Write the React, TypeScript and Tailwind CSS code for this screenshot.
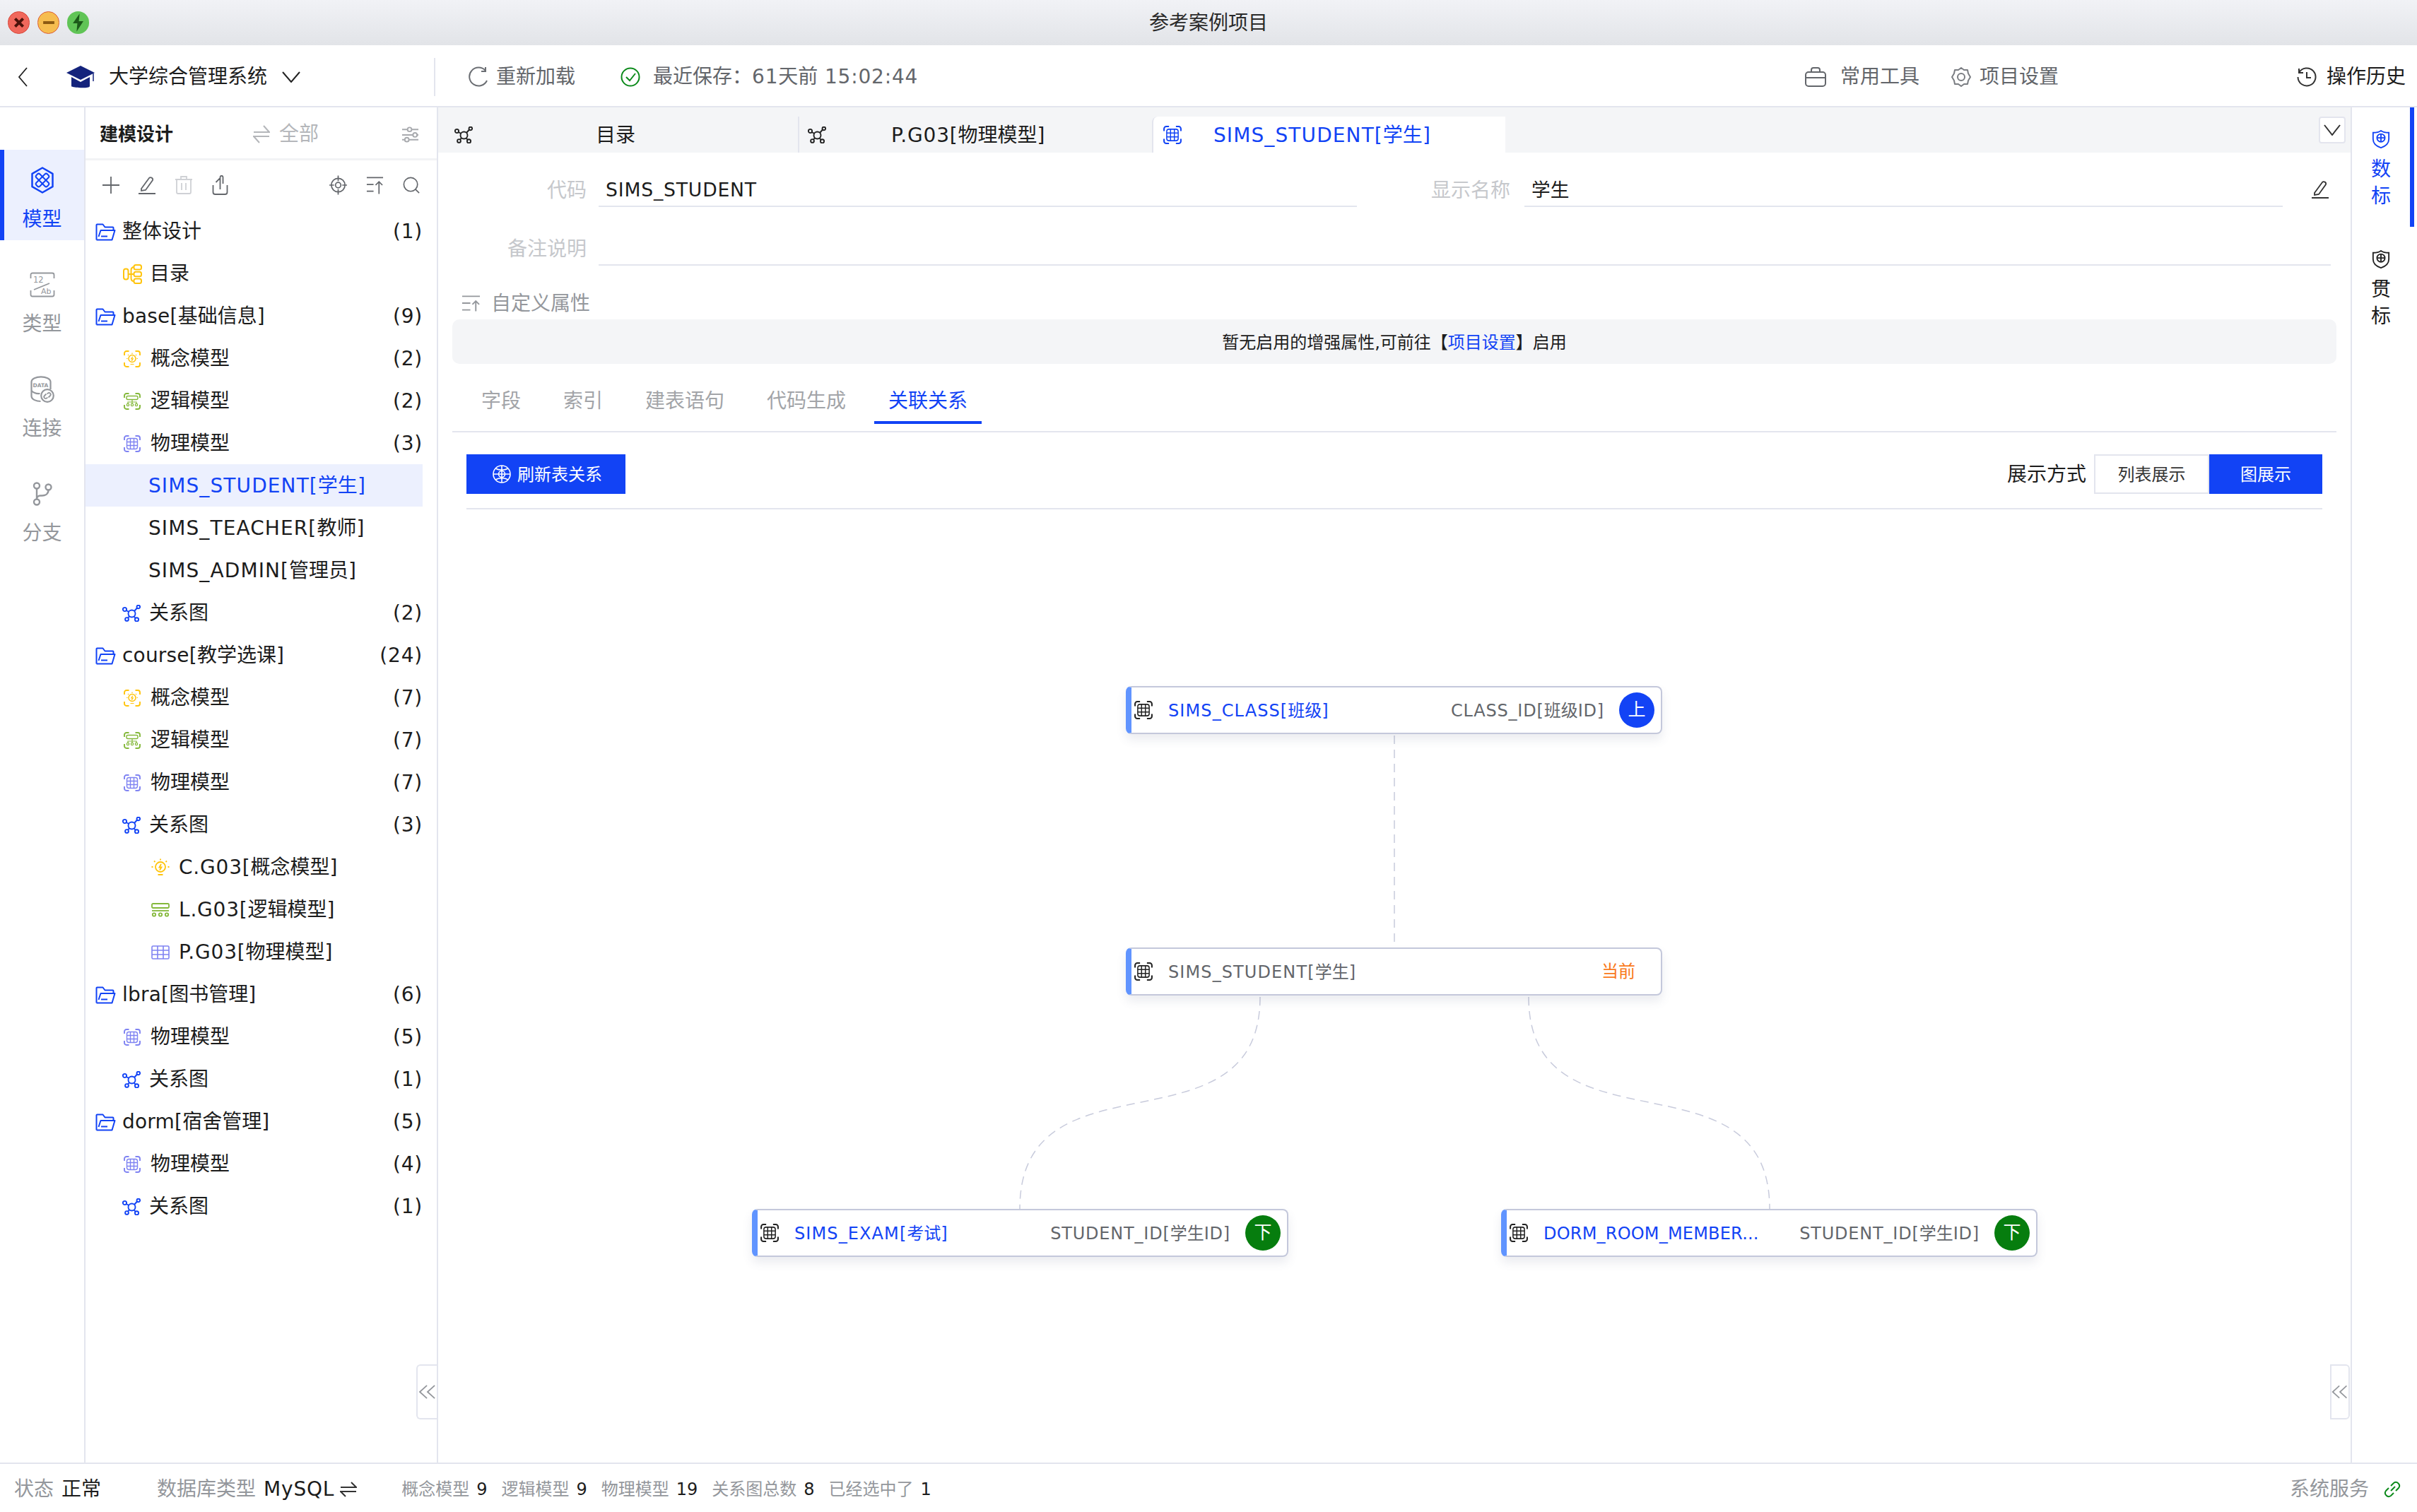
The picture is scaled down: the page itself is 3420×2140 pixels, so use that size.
import React from 'react';

const BLUE = '#1243f5';

type IconProps = { className?: string; color?: string };

// latin runs sit a touch wider than the fallback font gives, caps more than lowercase
const trackFor = (part: string) => {
  if (/^[a-z]/.test(part)) return 'tracking-[0.2px]';
  if (part.startsWith('SIMS_') && part.endsWith('[')) return 'tracking-[1.1px]';
  if (part.startsWith('DORM_')) return 'tracking-[0.2px]';
  return 'tracking-[0.8px]';
};

const Mix = ({ text }: { text: string }) => (
  <>
    {text
      .split(/([\x00-\x7f]+)/)
      .filter(Boolean)
      .map((part, i) =>
        /^[\x00-\x7f]/.test(part) ? (
          <span key={i} className={trackFor(part)}>
            {part}
          </span>
        ) : (
          <React.Fragment key={i}>{part}</React.Fragment>
        )
      )}
  </>
);

// corner brackets shared by the three model icons
const Corners = ({ color }: { color: string }) => (
  <path d="M1 7V4a3 3 0 0 1 3-3h3.500M16.500 1H20a3 3 0 0 1 3 3v3M23 17v3a3 3 0 0 1-3 3h-3.500M7.500 23H4a3 3 0 0 1-3-3v-3" fill="none" stroke={color} strokeWidth="1.900" />
);

const PhysicalIcon = ({ className, color = '#7f83f2' }: IconProps) => (
  <svg viewBox="0 0 24 24" className={className} fill="none">
    <Corners color={color} />
    <rect x="4.500" y="4.500" width="15" height="15" rx="3" stroke={color} strokeWidth="1.400" />
    <path d="M9.500 4.500v15M14.500 4.500v15M4.500 9.500h15M4.500 14.500h15" stroke={color} strokeWidth="1.400" />
  </svg>
);

const LogicIcon = ({ className }: IconProps) => (
  <svg viewBox="0 0 24 24" className={className} fill="none">
    <Corners color="#84b83a" />
    <rect x="4" y="4.500" width="16" height="5" rx="2" stroke="#84b83a" strokeWidth="1.400" />
    <path d="M12 9.500V15M6 15v-2h12v2" stroke="#84b83a" strokeWidth="1.200" />
    <circle cx="6" cy="17" r="1.700" stroke="#84b83a" strokeWidth="1.200" />
    <circle cx="12" cy="17" r="1.700" stroke="#84b83a" strokeWidth="1.200" />
    <circle cx="18" cy="17" r="1.700" stroke="#84b83a" strokeWidth="1.200" />
  </svg>
);

const BulbIcon = ({ className }: IconProps) => (
  <svg viewBox="0 0 24 24" className={className} fill="none">
    <Corners color="#ffc40d" />
    <circle cx="12" cy="11.500" r="5" stroke="#ffc40d" strokeWidth="1.500" />
    <path d="M9.500 19.500h5M12.800 8.800l-2 3h2.400l-2 3" stroke="#ffc40d" strokeWidth="1.200" />
    <path d="M12 3.500v1.500M6 6l1 1M18 6l-1 1M4 11.500h1.500M18.500 11.500H20" stroke="#ffc40d" strokeWidth="1.200" />
  </svg>
);

const RelationIcon = ({ className, color = BLUE }: IconProps) => (
  <svg viewBox="0 0 26 24" className={className} fill="none" stroke={color} strokeWidth="1.900">
    <circle cx="13.500" cy="12.500" r="5" />
    <circle cx="3.500" cy="6.500" r="2.600" />
    <circle cx="22.800" cy="3" r="2.300" />
    <circle cx="6.500" cy="20.500" r="2.400" />
    <circle cx="20.500" cy="20.800" r="2.600" />
    <path d="M5.800 8l3.500 2M17 9l4-4.500M10.200 16.200l-2.300 2.500M16.700 16.500l2 2.300" />
  </svg>
);

const FolderOpen = ({ className }: IconProps) => (
  <svg viewBox="0 0 29 25" className={className} fill="none" stroke={BLUE} strokeWidth="2" strokeLinejoin="round">
    <path d="M1.5 23.5V2.5a1 1 0 0 1 1-1h8l3 4h11a1 1 0 0 1 1 1V10" />
    <path d="M1.5 23.5h22l4-13.5H7.5l-3 9" />
    <path d="M8 18.5h9" />
  </svg>
);

const MindIcon = ({ className }: IconProps) => (
  <svg viewBox="0 0 27 28" className={className} fill="none" stroke="#ffc40d" strokeWidth="2">
    <rect x="1" y="6.500" width="6.500" height="15" rx="3" />
    <rect x="15.500" y="1" width="10.500" height="6.500" rx="2.500" />
    <rect x="15.500" y="10.700" width="10.500" height="6.500" rx="2.500" />
    <rect x="15.500" y="20.500" width="10.500" height="6.500" rx="2.500" />
    <path d="M7.500 14h8M11.500 14V8.500c0-3 1-4.500 4-4.500M11.500 14v5.500c0 3 1 4.500 4 4.500" />
  </svg>
);

const SmallBulb = ({ className }: IconProps) => (
  <svg viewBox="0 0 26 26" className={className} fill="none" stroke="#ffc40d" strokeWidth="1.8">
    <circle cx="13" cy="12" r="7" />
    <path d="M9.5 23h7M14 8l-2.500 4.500h3L12 16.500" />
    <path d="M13 0.500v2M0.500 12h2M23.500 12h2M4 3.500l1.500 1.500M22 3.500L20.500 5" />
  </svg>
);

const SmallLogic = ({ className }: IconProps) => (
  <svg viewBox="0 0 26 20" className={className} fill="none" stroke="#84b83a" strokeWidth="1.8">
    <rect x="1" y="1" width="24" height="6" rx="1.500" />
    <path d="M1 11h24" />
    <circle cx="4" cy="16.500" r="2.200" />
    <circle cx="13" cy="16.500" r="2.200" />
    <circle cx="22" cy="16.500" r="2.200" />
  </svg>
);

const SmallGrid = ({ className }: IconProps) => (
  <svg viewBox="0 0 26 20" className={className} fill="none" stroke="#7f83f2" strokeWidth="1.600">
    <rect x="1" y="1" width="24" height="18" rx="1.500" />
    <path d="M9 1v18M17 1v18M1 7h24M1 13h24" />
  </svg>
);

type TreeRow = { label: string; level: number; icon?: string; count?: string; selected?: boolean };

const rows: TreeRow[] = [
  { label: '整体设计', level: 1, icon: 'folder', count: '(1)' },
  { label: '目录', level: 2, icon: 'mind' },
  { label: 'base[基础信息]', level: 1, icon: 'folder', count: '(9)' },
  { label: '概念模型', level: 2, icon: 'bulb', count: '(2)' },
  { label: '逻辑模型', level: 2, icon: 'logic', count: '(2)' },
  { label: '物理模型', level: 2, icon: 'grid', count: '(3)' },
  { label: 'SIMS_STUDENT[学生]', level: 0, selected: true },
  { label: 'SIMS_TEACHER[教师]', level: 0 },
  { label: 'SIMS_ADMIN[管理员]', level: 0 },
  { label: '关系图', level: 2, icon: 'rel', count: '(2)' },
  { label: 'course[教学选课]', level: 1, icon: 'folder', count: '(24)' },
  { label: '概念模型', level: 2, icon: 'bulb', count: '(7)' },
  { label: '逻辑模型', level: 2, icon: 'logic', count: '(7)' },
  { label: '物理模型', level: 2, icon: 'grid', count: '(7)' },
  { label: '关系图', level: 2, icon: 'rel', count: '(3)' },
  { label: 'C.G03[概念模型]', level: 3, icon: 'sbulb' },
  { label: 'L.G03[逻辑模型]', level: 3, icon: 'slogic' },
  { label: 'P.G03[物理模型]', level: 3, icon: 'sgrid' },
  { label: 'lbra[图书管理]', level: 1, icon: 'folder', count: '(6)' },
  { label: '物理模型', level: 2, icon: 'grid', count: '(5)' },
  { label: '关系图', level: 2, icon: 'rel', count: '(1)' },
  { label: 'dorm[宿舍管理]', level: 1, icon: 'folder', count: '(5)' },
  { label: '物理模型', level: 2, icon: 'grid', count: '(4)' },
  { label: '关系图', level: 2, icon: 'rel', count: '(1)' },
];

const RowIcon = ({ type }: { type?: string }) => {
  if (type === 'folder') return <FolderOpen className="w-[29px] h-[25px] mr-[9px] shrink-0" />;
  if (type === 'mind') return <MindIcon className="w-[27px] h-[28px] mr-[11px] shrink-0 -ml-[1px]" />;
  if (type === 'bulb') return <BulbIcon className="w-[24px] h-[24px] mr-[14px] shrink-0" />;
  if (type === 'logic') return <LogicIcon className="w-[24px] h-[24px] mr-[14px] shrink-0" />;
  if (type === 'grid') return <PhysicalIcon className="w-[24px] h-[24px] mr-[14px] shrink-0" />;
  if (type === 'rel') return <RelationIcon className="w-[26px] h-[24px] mr-[12px] shrink-0 -ml-[2px]" />;
  if (type === 'sbulb') return <SmallBulb className="w-[26px] h-[26px] mr-[13px] shrink-0" />;
  if (type === 'slogic') return <SmallLogic className="w-[26px] h-[20px] mr-[13px] shrink-0" />;
  if (type === 'sgrid') return <SmallGrid className="w-[26px] h-[20px] mr-[13px] shrink-0" />;
  return null;
};

const levelPad: Record<number, string> = { 0: 'pl-[89px]', 1: 'pl-[14px]', 2: 'pl-[54px]', 3: 'pl-[93px]' };

const SideItem = ({ label, active, icon }: { label: string; active?: boolean; icon: React.ReactNode }) => (
  <div className={`relative h-[128px] flex flex-col items-center ${active ? 'bg-[#ecf0fe]' : ''}`}>
    {active && <div className="absolute left-0 top-0 bottom-0 w-[6px] bg-[#1243f5]" />}
    <div className="h-[40px] mt-[23px] flex items-center justify-center">{icon}</div>
    <div className={`mt-[17px] text-[28px] leading-[38px] ${active ? 'text-[#1243f5]' : 'text-[#94979c]'}`}>{label}</div>
  </div>
);

type NodeProps = {
  pos: string;
  name: string;
  nameClass?: string;
  field?: string;
  badge?: string;
  badgeClass?: string;
  current?: boolean;
};

const TableNode = ({ pos, name, nameClass = 'text-[#1243f5]', field, badge, badgeClass, current }: NodeProps) => (
  <div className={`absolute w-[759px] h-[68px] flex items-center bg-white rounded-[8px] border-2 border-[#c4c8db] border-l-[8px] border-l-[#6094ff] shadow-[0_8px_14px_rgba(90,100,130,0.12)] text-[24px] ${pos}`}>
    <PhysicalIcon color="#222222" className="w-[26px] h-[26px] ml-[4px] mr-[1px] shrink-0" />
    <span className={`ml-[21px] pt-[1px] whitespace-nowrap ${nameClass}`}>
      <Mix text={name} />
    </span>
    <div className="flex-1" />
    {field && (
      <span className="pt-[1px] text-[#63666b] whitespace-nowrap">
        <Mix text={field} />
      </span>
    )}
    {badge && (
      <span className={`w-[50px] h-[50px] ml-[21px] mr-[9px] rounded-full flex items-center justify-center text-white text-[25px] shrink-0 ${badgeClass}`}>{badge}</span>
    )}
    {current && <span className="text-[#f97a1c] mr-[36px]">当前</span>}
  </div>
);

export default function App() {
  return (
    <div
      className="w-[3420px] h-[2140px] flex flex-col bg-white overflow-hidden text-[#1c1c1c] text-[28px]"
      style={{ fontFamily: '"DejaVu Sans", "Noto Sans CJK SC", sans-serif' }}
    >
      {/* title bar */}
      <div className="relative h-[64px] shrink-0 flex items-center justify-center bg-gradient-to-b from-[#f1f2f6] to-[#e2e4e8]">
        <div className="absolute left-[11px] top-[16px] flex gap-[11px]">
          <div className="w-[31px] h-[32px] rounded-full bg-[#f0685c] border border-[#d8473a] flex items-center justify-center">
            <svg viewBox="0 0 16 16" className="w-[18px] h-[18px]"><path d="M3 3l10 10M13 3L3 13" stroke="#4d130b" strokeWidth="3.6" /></svg>
          </div>
          <div className="w-[31px] h-[32px] rounded-full bg-[#f6bd4f] border border-[#dc5f3a] flex items-center justify-center">
            <svg viewBox="0 0 16 16" className="w-[20px] h-[18px]"><path d="M1 8h14" stroke="#8c5a12" strokeWidth="3.6" /></svg>
          </div>
          <div className="w-[31px] h-[32px] rounded-full bg-[#60c456] flex items-center justify-center">
            <svg viewBox="0 0 16 24" className="w-[17px] h-[26px]"><path d="M10 0L1 13h6l-1 11 9-14H9z" fill="#1c5a1a" /></svg>
          </div>
        </div>
        <span className="text-[28px] pt-[2px] text-[#2a2a2a]">参考案例项目</span>
      </div>

      {/* toolbar */}
      <div className="h-[88px] shrink-0 flex items-center border-b-2 border-[#e3e5ee] pt-[4px]">
        <svg viewBox="0 0 16 28" className="w-[16px] h-[28px] ml-[24px]" fill="none" stroke="#222" strokeWidth="1.800"><path d="M14 1L3 14l11 13" /></svg>
        <svg viewBox="0 0 40 32" className="w-[40px] h-[32px] ml-[54px]">
          <path d="M20 0L40 10 20 20 0 10z" fill="#14237c" />
          <path d="M7 16v13c0 2 26 4 26 0V16l-13 7z" fill="#14237c" />
          <path d="M38 11v11" stroke="#14237c" strokeWidth="1.500" />
        </svg>
        <span className="ml-[20px] whitespace-nowrap">大学综合管理系统</span>
        <svg viewBox="0 0 26 16" className="w-[26px] h-[16px] ml-[21px]" fill="none" stroke="#222" strokeWidth="2"><path d="M1 1l12 14L25 1" /></svg>
        <div className="w-[2px] h-[54px] bg-[#e3e5ee] ml-[189px]" />
        <svg viewBox="0 0 28 30" className="w-[28px] h-[30px] ml-[47px]" fill="none" stroke="#6b6e73" strokeWidth="2"><path d="M24 6a13 13 0 1 0 2 14M24 1v6h-6" /></svg>
        <span className="ml-[11px] text-[#63666b] whitespace-nowrap">重新加载</span>
        <svg viewBox="0 0 28 28" className="w-[28px] h-[28px] ml-[64px]" fill="none" stroke="#0c8a1b" strokeWidth="2"><circle cx="14" cy="14" r="12.500" /><path d="M8 14l5 5 8-10" /></svg>
        <span className="ml-[18px] text-[#63666b] whitespace-nowrap">
          <Mix text="最近保存：61天前 15:02:44" />
        </span>
        <div className="flex-1" />
        <svg viewBox="0 0 30 28" className="w-[30px] h-[28px]" fill="none" stroke="#63666b" strokeWidth="2"><rect x="1" y="7" width="28" height="20" rx="4" /><path d="M9 7V4a3 3 0 0 1 3-3h6a3 3 0 0 1 3 3v3M1 15h28" /></svg>
        <span className="ml-[20px] text-[#63666b] whitespace-nowrap">常用工具</span>
        <svg viewBox="0 0 28 28" className="w-[28px] h-[28px] ml-[45px]" fill="none" stroke="#7a7d82" strokeWidth="2"><path d="M14 1l4 3 5 0 1 5 3 5-3 5-1 5-5 0-4 3-4-3-5 0-1-5-3-5 3-5 1-5 5 0z" strokeLinejoin="round" /><circle cx="14" cy="14" r="5" /></svg>
        <span className="ml-[12px] text-[#63666b] whitespace-nowrap">项目设置</span>
        <svg viewBox="0 0 28 28" className="w-[28px] h-[28px] ml-[337px]" fill="none" stroke="#333" strokeWidth="2"><path d="M3 8A12.500 12.500 0 1 1 1.500 14M3 2v6h6M14 7v8h6" /></svg>
        <span className="ml-[14px] mr-[16px] whitespace-nowrap">操作历史</span>
      </div>

      {/* body */}
      <div className="flex-1 flex min-h-0">
        {/* icon rail */}
        <div className="w-[121px] shrink-0 border-r-2 border-[#e3e5ee] pt-[60px] flex flex-col gap-[20px]">
          <SideItem
            label="模型"
            active
            icon={
              <svg viewBox="0 0 34 38" className="w-[34px] h-[38px]" fill="none" stroke="#1243f5" strokeWidth="2.500">
                <path d="M17 1.500l14.500 8.300v18.400L17 36.500 2.500 28.200V9.800z" strokeLinejoin="round" />
                <rect x="13.500" y="8" width="7" height="22" rx="2.500" transform="rotate(45 17 19)" strokeWidth="2" />
                <rect x="13.500" y="8" width="7" height="22" rx="2.500" transform="rotate(-45 17 19)" strokeWidth="2" />
              </svg>
            }
          />
          <SideItem
            label="类型"
            icon={
              <svg viewBox="0 0 36 36" className="w-[36px] h-[36px]" fill="none" stroke="#94979c" strokeWidth="1.800">
                <path d="M1.500 9V4a2.500 2.500 0 0 1 2.500-2.500h28A2.500 2.500 0 0 1 34.500 4v5M1.500 26v6A2.500 2.500 0 0 0 4 34.500h28a2.500 2.500 0 0 0 2.500-2.500v-6M6 25l22-9" />
                <text x="5" y="15" fontSize="11.500" fill="#94979c" stroke="none">12</text>
                <text x="16" y="30.500" fontSize="11" fill="#94979c" stroke="none">Ab</text>
              </svg>
            }
          />
          <SideItem
            label="连接"
            icon={
              <svg viewBox="0 0 34 38" className="w-[34px] h-[38px]" fill="none" stroke="#94979c" strokeWidth="2.200">
                <path d="M1.500 8.500c0-9.500 27-9.500 27 0V19M1.500 8.500v20c0 5 7 7.500 13 7.500" />
                <text x="3.500" y="15.500" fontSize="7.500" fontWeight="700" fill="#94979c" stroke="none">DATA</text>
                <path d="M1.500 21c3 3 8 4.500 12 4" />
                <circle cx="24" cy="28" r="8.800" fill="#ffffff" />
                <path d="M22.500 25.500l-2.500 2.500a2.300 2.300 0 0 0 3.300 3.300l1-1M25.500 30.500L28 28a2.300 2.300 0 0 0-3.300-3.300l-1 1" strokeWidth="1.800" />
              </svg>
            }
          />
          <SideItem
            label="分支"
            icon={
              <svg viewBox="0 0 28 34" className="w-[28px] h-[34px]" fill="none" stroke="#94979c" strokeWidth="2.400">
                <circle cx="6" cy="5.500" r="4" />
                <circle cx="6" cy="28.500" r="4" />
                <circle cx="22.500" cy="7.500" r="4" />
                <path d="M6 9.500v15M22.500 11.500c0 6-5 8-9 8H11c-3 0-5 2-5 5" />
              </svg>
            }
          />
        </div>

        {/* tree panel */}
        <div className="relative w-[499px] shrink-0 border-r-2 border-[#e3e5ee] flex flex-col">
          <div className="h-[75px] shrink-0 flex items-center border-b-[3px] border-[#f2f3f5] pl-[20px] pr-[25px] pt-[4px]">
            <span className="text-[26px] font-semibold whitespace-nowrap">建模设计</span>
            <svg viewBox="0 0 24 28" className="w-[24px] h-[28px] ml-[113px]" fill="none" stroke="#b4b6ba" strokeWidth="2"><path d="M1 11h22l-8-9M23 17H1l8 9" /></svg>
            <span className="ml-[13px] text-[#b4b6ba]">全部</span>
            <div className="flex-1" />
            <svg viewBox="0 0 26 24" className="w-[25px] h-[24px]" fill="none" stroke="#a8aaae" strokeWidth="2"><path d="M1 5h8M15 5h10M1 13h16M23 13h2M1 20h4M11 20h14" /><circle cx="12" cy="5" r="3" /><circle cx="20" cy="13" r="3" /><circle cx="8" cy="20" r="3" /></svg>
          </div>
          <div className="h-[70px] shrink-0 flex items-center pl-[24px] pr-[24px]">
            <svg viewBox="0 0 24 24" className="w-[24px] h-[24px]" fill="none" stroke="#63666b" strokeWidth="1.800"><path d="M12 0v24M0 12h24" /></svg>
            <svg viewBox="0 0 26 26" className="w-[26px] h-[26px] ml-[26px]" fill="none" stroke="#63666b" strokeWidth="1.800"><path d="M5 18L16 3c2-2 6 0 5 3L11 20l-6 1zM1 25h24" /></svg>
            <svg viewBox="0 0 26 26" className="w-[26px] h-[26px] ml-[26px]" fill="none" stroke="#cfd1d5" strokeWidth="1.800"><path d="M1 5h24M9 5V1h8v4M3 5v18a2 2 0 0 0 2 2h16a2 2 0 0 0 2-2V5M10 10v10M16 10v10" /></svg>
            <svg viewBox="0 0 26 28" className="w-[27px] h-[28px] ml-[25px]" fill="none" stroke="#63666b" strokeWidth="1.800"><path d="M13 20V3c0-3 4-3 4 0v9M7 10l6-6M3 14v10a3 3 0 0 0 3 3h14a3 3 0 0 0 3-3V14" /></svg>
            <div className="flex-1" />
            <svg viewBox="0 0 26 28" className="w-[25px] h-[28px]" fill="none" stroke="#63666b" strokeWidth="1.800"><circle cx="13" cy="14" r="10" /><circle cx="13" cy="14" r="4" /><path d="M13 0v8M13 20v8M0 14h7M19 14h7" /></svg>
            <svg viewBox="0 0 26 26" className="w-[25px] h-[26px] ml-[27px]" fill="none" stroke="#63666b" strokeWidth="1.800"><path d="M1 2h24M1 12h10M1 22h10M19 26V8M14 13l5-5 5 5" /></svg>
            <svg viewBox="0 0 26 26" className="w-[24px] h-[26px] ml-[27px]" fill="none" stroke="#63666b" strokeWidth="1.800"><circle cx="12" cy="12" r="10.500" /><path d="M19 19l6 6" /></svg>
          </div>
          <div className="pr-[20px]">
            {rows.map((r, i) => (
              <div key={i} className={`h-[60px] pt-[2px] flex items-center ${levelPad[r.level]} ${r.selected ? 'bg-[#ecf0fe] text-[#1243f5]' : ''}`}>
                <RowIcon type={r.icon} />
                <span className="whitespace-nowrap flex-1">
                  <Mix text={r.label} />
                </span>
                {r.count && (
                  <span className="whitespace-nowrap">
                    <Mix text={r.count} />
                  </span>
                )}
              </div>
            ))}
          </div>
          {/* collapse handle */}
          <div className="absolute right-0 bottom-[61px] w-[29px] h-[78px] bg-white border-2 border-r-0 border-[#e3e5ee] rounded-l-[6px] flex items-center justify-center">
            <svg viewBox="0 0 28 24" className="w-[26px] h-[22px]" fill="none" stroke="#94979c" strokeWidth="2"><path d="M13 2L2 12l11 10M25 2L14 12l11 10" /></svg>
          </div>
        </div>

        {/* main */}
        <div className="relative flex-1 min-w-0 flex flex-col">
          <div className="relative h-[64px] shrink-0 bg-[#f4f5f7] flex items-end">
            <div className="w-[511px] h-[51px] flex items-center pl-[23px] border-r-2 border-[#e3e5ee]">
              <RelationIcon color="#222222" className="w-[26px] h-[24px] shrink-0" />
              <span className="ml-[174px] pt-[2px]">目录</span>
            </div>
            <div className="w-[499px] h-[51px] flex items-center pl-[12px]">
              <RelationIcon color="#222222" className="w-[26px] h-[24px] shrink-0" />
              <span className="ml-[92px] pt-[2px] whitespace-nowrap">
                <Mix text="P.G03[物理模型]" />
              </span>
            </div>
            <div className="w-[500px] h-[51px] flex items-center pl-[14px] bg-white rounded-tl-[8px] border-l-2 border-[#e3e5ee] text-[#1243f5]">
              <PhysicalIcon color="#1243f5" className="w-[26px] h-[28px] shrink-0" />
              <span className="ml-[45px] pt-[2px] whitespace-nowrap">
                <Mix text="SIMS_STUDENT[学生]" />
              </span>
            </div>
            <div className="absolute right-[7px] top-[13px] w-[38px] h-[38px] bg-white border-2 border-[#e3e5ee] rounded-[4px] flex items-center justify-center">
              <svg viewBox="0 0 24 16" className="w-[24px] h-[16px]" fill="none" stroke="#333" strokeWidth="2"><path d="M1 1l11 14L23 1" /></svg>
            </div>
          </div>

          <div className="flex items-center mt-[30px]">
            <span className="w-[210px] text-right text-[#c6c8cc] shrink-0">代码</span>
            <div className="ml-[17px] w-[1073px] h-[47px] flex items-center pl-[10px] border-b-2 border-[#e3e5ee] text-[26.67px]">
              <Mix text="SIMS_STUDENT" />
            </div>
            <span className="w-[217px] text-right text-[#c6c8cc] shrink-0">显示名称</span>
            <div className="ml-[20px] w-[1073px] h-[47px] flex items-center pl-[10px] border-b-2 border-[#e3e5ee] text-[26.67px]">学生</div>
            <svg viewBox="0 0 26 26" className="w-[26px] h-[26px] ml-[40px] -mt-[4px]" fill="none" stroke="#333" strokeWidth="1.800"><path d="M5 18L16 3c2-2 6 0 5 3L11 20l-6 1zM1 25h24" /></svg>
          </div>
          <div className="flex items-center mt-[36px]">
            <span className="w-[210px] text-right text-[#c6c8cc] shrink-0">备注说明</span>
            <div className="ml-[17px] w-[2451px] h-[47px] border-b-2 border-[#e3e5ee]" />
          </div>
          <div className="h-[40px] mt-[33px] flex items-center pl-[33px] text-[#94979c]">
            <svg viewBox="0 0 28 26" className="w-[27px] h-[26px]" fill="none" stroke="#94979c" strokeWidth="2"><path d="M1 3h26M1 13h12M1 23h12M21 25V10M16 15l5-5 5 5" /></svg>
            <span className="ml-[15px] pt-[1px]">自定义属性</span>
          </div>
          <div className="mt-[3px] ml-[20px] mr-[20px] h-[63px] shrink-0 rounded-[10px] bg-[#f4f5f7] flex items-center justify-center text-[24px] pt-[3px]">
            暂无启用的增强属性,可前往【<span className="text-[#1243f5]">项目设置</span>】启用
          </div>

          <div className="mt-[21px] ml-[20px] mr-[20px] pl-[21px] pb-[10px] border-b-2 border-[#e3e5ee] flex gap-[20px] text-[#a2a4a8]">
            <div className="h-[64px] px-[20px] flex items-center">字段</div>
            <div className="h-[64px] px-[20px] flex items-center">索引</div>
            <div className="h-[64px] px-[20px] flex items-center">建表语句</div>
            <div className="h-[64px] px-[20px] flex items-center">代码生成</div>
            <div className="h-[64px] px-[20px] pt-[4px] flex items-center border-b-4 border-[#1243f5] text-[#1243f5]">关联关系</div>
          </div>

          <div className="mt-[31px] ml-[40px] mr-[40px] pb-[20px] border-b-2 border-[#e3e5ee] flex items-center">
            <div className="w-[225px] h-[56px] bg-[#1243f5] text-white text-[24px] flex items-center pl-[37px]">
              <svg viewBox="0 0 26 26" className="w-[26px] h-[26px] shrink-0" fill="none" stroke="#fff" strokeWidth="1.600"><circle cx="13" cy="13" r="12" /><path d="M1 13h24M13 1v24M4 5c5 3 13 3 18 0M4 21c5-3 13-3 18 0" /><circle cx="13" cy="13" r="4.500" /></svg>
              <span className="ml-[9px] pt-[2px] whitespace-nowrap">刷新表关系</span>
            </div>
            <div className="flex-1" />
            <span className="pt-[2px] whitespace-nowrap">展示方式</span>
            <div className="ml-[11px] w-[163px] h-[56px] pt-[2px] border-2 border-[#e3e5ee] flex items-center justify-center text-[24px] text-[#333]">列表展示</div>
            <div className="w-[160px] h-[56px] pt-[2px] bg-[#1243f5] text-white text-[24px] flex items-center justify-center">图展示</div>
          </div>

          {/* relation diagram */}
          <div className="relative flex-1">
            <svg className="absolute left-0 top-0 w-[2706px] h-[1349px]" viewBox="620 721 2706 1349" fill="none" stroke="#c8cbdc" strokeWidth="1.500" strokeDasharray="12 8">
              <path d="M1973 1041V1341" />
              <path d="M1783 1411C1783 1640 1443 1480 1443 1711" />
              <path d="M2163 1411C2163 1640 2504 1480 2504 1711" />
            </svg>
            <TableNode pos="left-[973px] top-[250px]" name="SIMS_CLASS[班级]" field="CLASS_ID[班级ID]" badge="上" badgeClass="bg-[#1243f5]" />
            <TableNode pos="left-[973px] top-[620px]" name="SIMS_STUDENT[学生]" nameClass="text-[#63666b]" current />
            <TableNode pos="left-[444px] top-[990px]" name="SIMS_EXAM[考试]" field="STUDENT_ID[学生ID]" badge="下" badgeClass="bg-[#067d0e]" />
            <TableNode pos="left-[1504px] top-[990px]" name="DORM_ROOM_MEMBER..." field="STUDENT_ID[学生ID]" badge="下" badgeClass="bg-[#067d0e]" />
          </div>

          {/* right collapse handle */}
          <div className="absolute right-[1px] bottom-[61px] w-[28px] h-[78px] bg-white border-2 border-[#e3e5ee] rounded-r-[6px] flex items-center justify-center">
            <svg viewBox="0 0 28 24" className="w-[24px] h-[22px]" fill="none" stroke="#94979c" strokeWidth="2"><path d="M13 2L2 12l11 10M25 2L14 12l11 10" /></svg>
          </div>
        </div>

        {/* right rail */}
        <div className="w-[94px] shrink-0 border-l-2 border-[#e3e5ee]">
          <div className="w-[88px] h-[169px] border-r-[6px] border-[#1243f5] flex flex-col items-center pt-[32px] text-[#1243f5] leading-[38px]">
            <svg viewBox="0 0 26 28" className="w-[26px] h-[26px] mb-[11px]" fill="none" stroke="#1243f5" strokeWidth="2"><path d="M13 1c4 3 8 3 12 3v10c0 7-6 11-12 13C7 25 1 21 1 14V4c4 0 8 0 12-3z" /><circle cx="13" cy="12" r="6" /><path d="M7 12h12M13 6v12" /></svg>
            <span>数</span>
            <span>标</span>
          </div>
          <div className="w-[82px] flex flex-col items-center pt-[33px] leading-[38px]">
            <svg viewBox="0 0 26 28" className="w-[26px] h-[26px] mb-[11px]" fill="none" stroke="#222" strokeWidth="2"><path d="M13 1c4 3 8 3 12 3v10c0 7-6 11-12 13C7 25 1 21 1 14V4c4 0 8 0 12-3z" /><circle cx="13" cy="12" r="6" /><path d="M7 12h12M13 6v12" /></svg>
            <span>贯</span>
            <span>标</span>
          </div>
        </div>
      </div>

      {/* status bar */}
      <div className="h-[70px] shrink-0 border-t-2 border-[#e3e5ee] flex items-center pt-[3px]">
        <span className="ml-[20px] text-[#94979c]">状态</span>
        <span className="ml-[11px]">正常</span>
        <span className="ml-[79px] text-[#94979c]">数据库类型</span>
        <span className="ml-[11px]">
          <Mix text="MySQL" />
        </span>
        <svg viewBox="0 0 24 22" className="w-[24px] h-[22px] ml-[8px]" fill="none" stroke="#333" strokeWidth="2"><path d="M1 8h22L16 1M23 14H1l7 7" /></svg>
        <div className="flex items-center text-[24px]">
          <span className="ml-[63px] text-[#94979c]">概念模型</span>
          <span className="ml-[10px]">9</span>
          <span className="ml-[20px] text-[#94979c]">逻辑模型</span>
          <span className="ml-[10px]">9</span>
          <span className="ml-[20px] text-[#94979c]">物理模型</span>
          <span className="ml-[10px]">19</span>
          <span className="ml-[20px] text-[#94979c]">关系图总数</span>
          <span className="ml-[10px]">8</span>
          <span className="ml-[20px] text-[#94979c]">已经选中了</span>
          <span className="ml-[10px]">1</span>
        </div>
        <div className="flex-1" />
        <span className="text-[#94979c]">系统服务</span>
        <svg viewBox="0 0 24 24" className="w-[24px] h-[24px] ml-[21px] mr-[23px]" fill="none" stroke="#0c8a1b" strokeWidth="2"><path d="M10 14l6-6M7 10l-4 4a5 5 0 0 0 7 7l4-4M17 14l4-4a5 5 0 0 0-7-7l-4 4" /></svg>
      </div>
    </div>
  );
}
